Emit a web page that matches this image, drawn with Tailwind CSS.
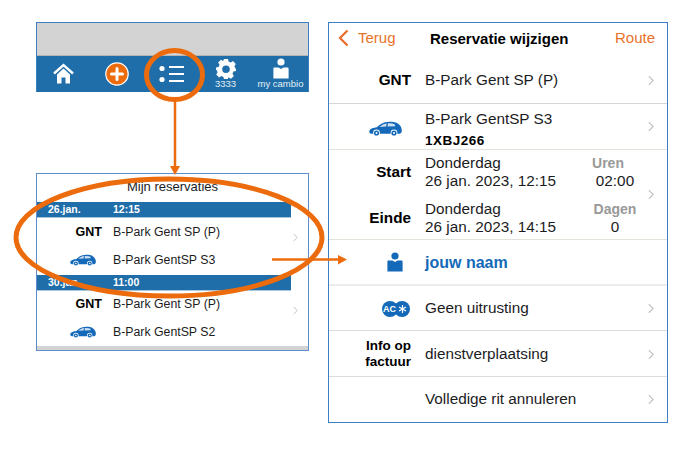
<!DOCTYPE html>
<html lang="en">
<head>
<meta charset="UTF-8">
<title>Reservatie wijzigen</title>
<script src="https://cdn.jsdelivr.net/npm/@tailwindcss/browser@4"></script>
</head>
<body class="bg-white">
<svg class="hidden">
  <symbol id="car" viewBox="0 0 33 15">
    <path fill="currentColor" d="M0.3 10.5C0.3 8.2 3 6.9 8 6.2C11 3.4 14.5 1 20 .8C24 .7 27 1.2 29 2.6C31.4 4.4 32.8 6.6 32.8 9.6C32.8 11.6 32 12.8 30.5 12.8H2.4C1 12.8 .3 11.8 .3 10.5Z"/>
    <path fill="#cfe0f2" d="M10.5 6C12.8 4 15 2.8 17.6 2.5L17.2 5.6ZM18.8 2.4C21 2.2 23.5 2.4 25.6 3.2L26.4 5.2L18.6 5.6Z"/>
    <circle cx="7.5" cy="12" r="3.4" fill="#fff"/><circle cx="7.5" cy="12" r="2.6" fill="currentColor"/><circle cx="7.5" cy="12" r="1" fill="#fff"/>
    <circle cx="25" cy="12" r="3.4" fill="#fff"/><circle cx="25" cy="12" r="2.6" fill="currentColor"/><circle cx="25" cy="12" r="1" fill="#fff"/>
  </symbol>
  <symbol id="chev" viewBox="0 0 7 12">
    <path d="M1 1l5 5-5 5" fill="none" stroke="#c4c4c6" stroke-width="1.4"/>
  </symbol>
</svg>

<div class="relative w-[690px] h-[452px] overflow-hidden font-['Liberation_Sans',sans-serif] text-[#1c1c1e]">
  <div class="flex items-start pt-[22px] pl-[36px] gap-[19px]">

    <!-- left column -->
    <div class="w-[273px] flex flex-col gap-[81px]">
      <div class="h-[70px] border border-[#3a80c4] border-b-0 flex flex-col">
        <div class="h-[33px] bg-[#d3d3d3] border-b border-[#b5b5b5]"></div>
        <div class="flex-1 bg-[#1f6ea9] flex text-white relative">
          <div class="w-[52px] flex justify-center pt-[7px]">
            <svg class="w-[21px] h-[21px]" viewBox="0 0 21 21"><path fill="none" stroke="#fff" stroke-width="2.4" d="M1 10.5L10.5 2L20 10.5"/><path fill="#fff" d="M4 11.5L10.5 5.6L17 11.5V20.5H12.5V14.5H8.5V20.5H4Z"/></svg>
          </div>
          <div class="w-[54px] flex justify-center pt-[6px] pl-[1px]">
            <svg class="w-[24px] h-[24px]" viewBox="0 0 24 24"><circle cx="12" cy="12" r="11.2" fill="#ec6b0c" stroke="#fff" stroke-width="1.2"/><path stroke="#fff" stroke-width="3" stroke-linecap="round" d="M12 6.5V17.5M6.5 12H17.5"/></svg>
          </div>
          <div class="w-[55px] flex justify-center pt-[9px] pl-[2px]">
            <svg class="w-[25px] h-[18px]" viewBox="0 0 25 18"><circle cx="3" cy="3.5" r="2.6" fill="#fff"/><circle cx="3" cy="14.5" r="2.6" fill="#fff"/><path stroke="#fff" stroke-width="2" d="M10 2H25M10 9H25M10 16H25"/></svg>
          </div>
          <div class="w-[55px] flex flex-col items-center pt-[3px]">
            <svg class="w-[20px] h-[20px]" viewBox="0 0 20 20"><path fill="#fff" fill-rule="evenodd" d="M8 0H12L12.6 2.6L14.7 3.5L17 2.1L19.8 5L18.4 7.2L19.3 9.3L20 10V12L17.4 12.6L16.5 14.7L17.9 17L15 19.8L12.8 18.4L12 18.8V20H8L7.4 17.9L5.3 17L3 18.4L.2 15.5L1.6 13.3L.7 11.2L0 10.5V8.5L2.6 7.9L3.5 5.8L2.1 3.5L5 .7L7.2 2.1ZM10 6.4A3.8 3.8 0 1 0 10 14A3.8 3.8 0 0 0 10 6.4Z"/></svg>
            <span class="text-[9.5px] leading-[10px] text-[#e4eef6]">3333</span>
          </div>
          <div class="flex-1 flex flex-col items-center pt-[2px]">
            <svg class="w-[16px] h-[21px]" viewBox="0 0 16 21"><circle cx="8" cy="4" r="3.6" fill="#fff"/><path fill="#fff" d="M1.5 9.5H5.5L8 11L10.5 9.5H14.5C15.3 9.5 15.6 10 15.6 10.8V20.5H.4V10.8C.4 10 .7 9.5 1.5 9.5Z"/></svg>
            <span class="text-[9.5px] leading-[10px] text-[#e4eef6] whitespace-nowrap">my cambio</span>
          </div>
        </div>
      </div>

      <div class="h-[178px] border border-[#5f8ccf] flex flex-col">
        <div class="h-[28px] text-center text-[13px] leading-[26px]">Mijn reservaties</div>
        <div class="h-[16px] w-[254px] bg-[#1f6ea9] border-b border-[#a9c8de] text-white text-[10.5px] leading-[15px] flex font-bold">
          <span class="w-[76px] pl-[11px]">26.jan.</span><span>12:15</span>
        </div>
        <div class="relative h-[57px]">
          <div class="h-[28px] flex items-center text-[12.3px]"><span class="w-[65px] text-right font-bold text-black text-[12.5px]">GNT</span><span class="ml-[11px]">B-Park Gent SP (P)</span></div>
          <div class="h-[28px] flex items-center text-[12.3px]"><span class="w-[65px] flex justify-end pr-[6px] text-[#1469b8]"><svg class="w-[26px] h-[12px]"><use href="#car"/></svg></span><span class="ml-[11px]">B-Park GentSP S3</span></div>
          <svg class="absolute right-[10px] top-[15px] w-[5px] h-[9px]"><use href="#chev"/></svg>
        </div>
        <div class="h-[16px] w-[254px] bg-[#1f6ea9] border-b border-[#a9c8de] text-white text-[10.5px] leading-[15px] flex font-bold">
          <span class="w-[76px] pl-[11px]">30.jan.</span><span>11:00</span>
        </div>
        <div class="relative h-[56px] -mt-px">
          <div class="h-[28px] flex items-center text-[12.3px]"><span class="w-[65px] text-right font-bold text-black text-[12.5px]">GNT</span><span class="ml-[11px]">B-Park Gent SP (P)</span></div>
          <div class="h-[28px] flex items-center text-[12.3px]"><span class="w-[65px] flex justify-end pr-[6px] text-[#1469b8]"><svg class="w-[26px] h-[12px]"><use href="#car"/></svg></span><span class="ml-[11px]">B-Park GentSP S2</span></div>
          <svg class="absolute right-[10px] top-[16px] w-[5px] h-[9px]"><use href="#chev"/></svg>
        </div>
        <div class="flex-1 bg-[#d3d3d3]"></div>
      </div>
    </div>

    <!-- right panel -->
    <div class="w-[340px] h-[401px] border border-[#3a80c4] flex flex-col text-[15.3px]">
      <div class="h-[34px] relative flex items-center pb-[4px] text-[#e8722a]">
        <svg class="ml-[8px] w-[12px] h-[18px]" viewBox="0 0 12 18"><path d="M10.5 1.5L3 9l7.5 7.5" fill="none" stroke="#ec6b2a" stroke-width="2.2"/></svg>
        <span class="ml-[9px] text-[15px]">Terug</span>
        <span class="absolute left-[101px] top-[5px] text-[15px] font-bold text-black whitespace-nowrap">Reservatie wijzigen</span>
        <span class="ml-auto mr-[12px] text-[15px]">Route</span>
      </div>

      <div class="h-[47px] border-b border-[#d6d6d6] flex items-center">
        <span class="w-[82px] text-right font-bold text-black">GNT</span>
        <span class="ml-[14px]">B-Park Gent SP (P)</span>
        <svg class="ml-auto mr-[13px] w-[6px] h-[11px]"><use href="#chev"/></svg>
      </div>

      <div class="h-[46px] border-b border-[#e4e3db] flex items-center">
        <span class="w-[73px] flex justify-end text-[#1469b8] pt-[4px]"><svg class="w-[33px] h-[15px]"><use href="#car"/></svg></span>
        <div class="ml-[23px] flex flex-col pt-[5px]">
          <span class="leading-[17px]">B-Park GentSP S3</span>
          <span class="leading-[17px] mt-[5px] text-[13.5px] font-bold tracking-[.5px] text-black">1XBJ266</span>
        </div>
        <svg class="ml-auto mr-[13px] w-[6px] h-[11px]"><use href="#chev"/></svg>
      </div>

      <div class="h-[90px] border-b border-[#e4e3db] relative flex flex-col pt-[4px] gap-[10px] text-[15.3px] leading-[18px]">
        <div class="flex">
          <span class="w-[82px] text-right font-bold text-black self-center">Start</span>
          <div class="ml-[14px] w-[160px]"><div>Donderdag</div><div class="whitespace-nowrap">26 jan. 2023, 12:15</div></div>
          <div class="w-[60px] text-center"><div class="font-bold text-[#999] text-[14px] pr-[14px]">Uren</div><div>02:00</div></div>
        </div>
        <div class="flex">
          <span class="w-[82px] text-right font-bold text-black self-center">Einde</span>
          <div class="ml-[14px] w-[160px]"><div>Donderdag</div><div class="whitespace-nowrap">26 jan. 2023, 14:15</div></div>
          <div class="w-[60px] text-center"><div class="font-bold text-[#999] text-[14px]">Dagen</div><div>0</div></div>
        </div>
        <svg class="absolute right-[13px] top-[39px] w-[6px] h-[11px]"><use href="#chev"/></svg>
      </div>

      <div class="h-[46px] border-b-2 border-[#ececec] flex items-center">
        <span class="w-[74px] flex justify-end pb-[1px]"><svg class="w-[16px] h-[20px] text-[#1469b8]" viewBox="0 0 16 20"><circle cx="8" cy="4" r="3.6" fill="currentColor"/><path fill="currentColor" d="M1.5 8.5H5.5L8 10L10.5 8.5H14.5C15.3 8.5 15.6 9 15.6 9.8V19.5H.4V9.8C.4 9 .7 8.5 1.5 8.5Z"/></svg></span>
        <span class="ml-[22px] pt-[1px] font-bold text-[#1469b8] text-[16px]">jouw naam</span>
      </div>

      <div class="h-[45px] border-b border-[#dcdcdc] flex items-center pt-[1px]">
        <span class="w-[81px] flex justify-end">
          <svg class="w-[28px] h-[16px]" viewBox="0 0 28 16"><circle cx="8" cy="8" r="8" fill="#1469b8"/><circle cx="20" cy="8" r="8" fill="#1469b8"/><path stroke="#fff" stroke-width="1.2" d="M20.5 4V12M17 6L24 10M17 10L24 6"/><text x="7.5" y="11.3" text-anchor="middle" font-size="9" font-weight="700" fill="#fff" font-family="Liberation Sans">AC</text></svg>
        </span>
        <span class="ml-[15px]">Geen uitrusting</span>
        <svg class="ml-auto mr-[13px] w-[6px] h-[11px]"><use href="#chev"/></svg>
      </div>

      <div class="h-[46px] border-b border-[#dcdcdc] flex items-center pt-[1px]">
        <span class="w-[82px] text-right font-bold text-black text-[13.5px] leading-[16px]">Info op<br>factuur</span>
        <span class="ml-[14px]">dienstverplaatsing</span>
        <svg class="ml-auto mr-[13px] w-[6px] h-[11px]"><use href="#chev"/></svg>
      </div>

      <div class="flex-1 flex items-center">
        <span class="ml-[96px]">Volledige rit annuleren</span>
        <svg class="ml-auto mr-[13px] w-[6px] h-[11px]"><use href="#chev"/></svg>
      </div>
    </div>
  </div>

  <!-- callouts over the screenshots -->
  <svg class="absolute inset-0 w-[690px] h-[452px] pointer-events-none" viewBox="0 0 690 452">
    <ellipse cx="174.5" cy="75" rx="28" ry="24.5" fill="none" stroke="#ec6b0c" stroke-width="5"/>
    <path d="M175 100V170" stroke="#ec6b0c" stroke-width="2.5"/>
    <path d="M170 166H180L175 175Z" fill="#ec6b0c"/>
    <ellipse cx="169" cy="237.5" rx="153" ry="58.5" fill="none" stroke="#ec6b0c" stroke-width="5"/>
    <path d="M272 259.5H340" stroke="#ec6b0c" stroke-width="2.5"/>
    <path d="M338 255V264.5L347 259.5Z" fill="#ec6b0c"/>
  </svg>
</div>
</body>
</html>
